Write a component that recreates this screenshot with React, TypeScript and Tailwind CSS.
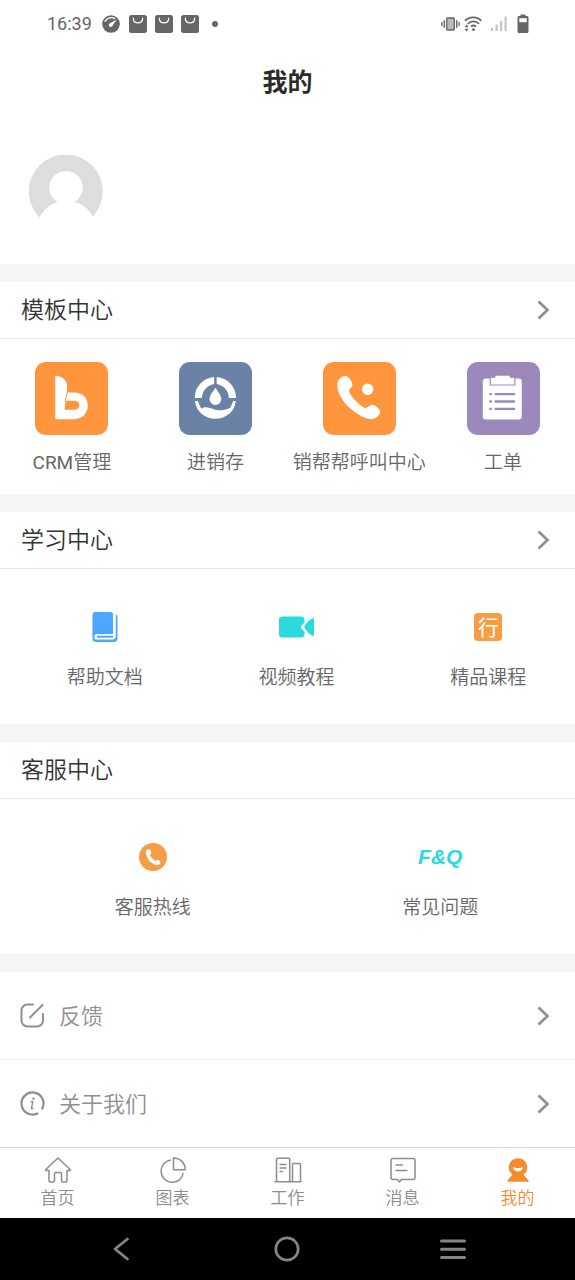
import type { ReactNode } from "react";

function StatusBar() {
  return (
    <div className="flex h-12 items-center justify-between pr-[46px] pl-[47px] text-[#666666]">
      <div className="flex items-center">
        <span className="font-['Roboto',sans-serif] text-lg leading-6 font-normal">16:39</span>
        <svg className="ml-[10px]" width="18" height="18" viewBox="0 0 18 18" aria-hidden="true">
          <circle cx="9" cy="9" r="8.8" fill="currentColor" />
          <path d="M3 6.4C5 2.6 9.500 1.800 12.600 3.400" fill="none" stroke="#fff" strokeWidth="1.300" strokeLinecap="round" />
          <path d="M14.600 4.600 10 11.600A2 2 0 0 1 7.200 8.800Z" fill="#fff" />
        </svg>
        <div className="ml-[9px] flex gap-2">
          {[0, 1, 2].map((n) => (
            <svg key={n} width="18" height="18" viewBox="0 0 18 18" aria-hidden="true">
              <rect width="18" height="18" rx="2.500" fill="currentColor" />
              <path d="M4.300 3.200C4.500 9.400 13.500 9.400 13.700 3.200" fill="none" stroke="#fff" strokeWidth="1.200" strokeLinecap="round" />
            </svg>
          ))}
        </div>
        <span className="ml-[13px] size-[6px] rounded-full bg-[#666666]" />
      </div>
      <div className="flex items-center">
        <svg width="19" height="16" viewBox="0 0 20 16" fill="none" stroke="currentColor" aria-hidden="true">
          <rect x="6" y="1.700" width="8" height="12.600" rx="0.800" fill="#bbbbbb" strokeWidth="1.400" />
          <path d="M3.400 4v8M16.600 4v8" strokeWidth="1.500" />
          <path d="M0.900 6v4M19.100 6v4" strokeWidth="1.300" />
        </svg>
        <svg className="ml-1" width="18" height="16" viewBox="0 0 18 16" fill="none" stroke="currentColor" aria-hidden="true">
          <path d="M1 4.800C5.500.3 13 .3 17.300 4.800M3.800 8C7 4.600 12 4.600 15 8M7 10.600C8.500 9.300 10.500 9.300 12 10.600" strokeWidth="1.800" />
          <circle cx="9.500" cy="13.700" r="1.400" fill="currentColor" stroke="none" />
          <path d="M.6 11.300 2.600 8.600 4.600 11.300ZM.6 12.700 2.600 15.400 4.600 12.700Z" fill="currentColor" stroke="none" />
        </svg>
        <svg className="ml-2" width="18" height="16" viewBox="0 0 18 16" fill="#c4c4c4" aria-hidden="true">
          <rect x="1" y="12" width="2.200" height="3" />
          <rect x="5.500" y="8.500" width="2.200" height="6.500" />
          <rect x="10" y="5" width="2.200" height="10" />
          <rect x="14.500" y="0.500" width="2.200" height="14.500" />
        </svg>
        <svg className="ml-[9px]" width="12" height="20" viewBox="0 0 12 20" aria-hidden="true">
          <path d="M3.500 .5h5v1.600H10A1.500 1.500 0 0 1 11.500 3.600V17.500A1.500 1.500 0 0 1 10 19H2A1.500 1.500 0 0 1 .5 17.500V3.600A1.500 1.500 0 0 1 2 2.100h1.500Z" fill="currentColor" />
          <rect x="2.300" y="4.200" width="7.400" height="4" fill="#fff" />
        </svg>
      </div>
    </div>
  );
}

function Chevron() {
  return (
    <svg className="mr-[25px]" width="13" height="20" viewBox="0 0 13 20" fill="none" stroke="#8f8f8f" strokeWidth="2.700" aria-hidden="true">
      <path d="M1.500 1.500 10.500 10 1.500 18.500" />
    </svg>
  );
}

function Section({ title, link, children }: { title: string; link?: boolean; children: ReactNode }) {
  return (
    <section className="border-t-[18px] border-[#f5f5f5]">
      <h2 className="border-b border-[#e6e6e6] text-[23px] leading-[52px] text-[#333333]">
        {link ? (
          <a href="#section" className="flex items-center justify-between pl-[21px]">
            <span className="pb-1">{title}</span>
            <Chevron />
          </a>
        ) : (
          <span className="block pb-1 pl-[21px]">{title}</span>
        )}
      </h2>
      {children}
    </section>
  );
}

function AppTile({ label, children }: { label: ReactNode; children: ReactNode }) {
  return (
    <a href="#app" className="flex flex-col items-center gap-[14px] whitespace-nowrap pt-[23px] pb-[17px] text-[19px] leading-7 text-[#666666]">
      <svg width="73" height="73" viewBox="0 0 74 74" aria-hidden="true">
        {children}
      </svg>
      <span className="font-['Roboto','Noto_Sans_CJK_SC',sans-serif]">{label}</span>
    </a>
  );
}

function LinkTile({ label, children }: { label: string; children: ReactNode }) {
  return (
    <a href="#item" className="flex flex-col items-center gap-[17px] pt-10 pb-[34px] pl-[18px] text-[19px] leading-7 text-[#666666]">
      <span className="flex h-9 items-center justify-center">{children}</span>
      {label}
    </a>
  );
}

function Tab({ label, active, children }: { label: string; active?: boolean; children: ReactNode }) {
  return (
    <a
      href="#tab"
      className={
        active
          ? "flex flex-col items-center gap-px pt-2 pb-[9px] text-[17px] leading-6 text-[#f88a2e]"
          : "flex flex-col items-center gap-px pt-2 pb-[9px] text-[17px] leading-6 text-[#8c8c8c]"
      }
    >
      <svg width="28" height="28" viewBox="0 0 28 28" fill="none" stroke="currentColor" strokeWidth="1.500" strokeLinejoin="round" aria-hidden="true">
        {children}
      </svg>
      {label}
    </a>
  );
}

export default function App() {
  return (
    <div className="w-full bg-white font-['Noto_Sans_CJK_SC',sans-serif] font-[350]">
      <StatusBar />
      <header>
        <h1 className="pb-[2px] text-center text-[25px] leading-[64px] font-bold text-[#2b2b2b]">我的</h1>
      </header>
      <main>
        <div className="px-[29px] pt-[41px] pb-[35px]">
          <svg width="74" height="74" viewBox="0 0 74 74" aria-label="头像">
            <path d="M10.500 62.500A37 37 0 1 1 64 61.500C59 53.500 53 48.500 45.500 47A16.700 16.700 0 1 0 28.500 47C21 49 15 54.500 10.500 62.500Z" fill="#dddddd" />
          </svg>
        </div>

        <Section title="模板中心" link>
          <div className="grid grid-cols-4">
            <AppTile label={<><span className="font-normal">CRM</span>管理</>}>
              <rect width="74" height="74" rx="11" fill="#ff953d" />
              <path fillRule="evenodd" d="M20.500 14C28 14.500 32.500 18.500 32.500 24.500V31H40C48 31 53.500 36 53.500 44.200S48 58 40 58H20.500ZM31 39.300 30 48.300H40.500A4.500 4.500 0 0 0 40.500 39.300Z" fill="#fff" />
              <path d="M33.500 27 30.500 40" stroke="#ff953d" strokeWidth="1" />
            </AppTile>
            <AppTile label="进销存">
              <rect width="74" height="74" rx="11" fill="#6a82a5" />
              <path d="M35.600 15.200V22.200A15 15 0 0 0 23.200 36.500H16A21 21 0 0 1 35.600 15.200ZM38.200 15.200V22.200A15 15 0 0 1 50.600 36.500H57.800A21 21 0 0 0 38.200 15.200Z" fill="#fff" />
              <path d="M36.900 26C39.500 30 42.900 34 42.900 37.500A6 6 0 0 1 30.900 37.500C30.900 34 34.300 30 36.900 26Z" fill="#fff" />
              <path d="M16.200 39.500H19L22.500 47.500C29 43.500 33 48.500 40 49 45 49.300 49 47.500 52 46.300L55 39.500H57.600C56.500 50 48 57.500 36.900 57.500S17.300 50 16.200 39.500Z" fill="#fff" />
            </AppTile>
            <AppTile label="销帮帮呼叫中心">
              <rect width="74" height="74" rx="11" fill="#ff953d" />
              <path d="M14.500 23.500C14 18 20 13 24 14.500 27 16 30.500 21 29.700 23.800 29 26.500 26 27 26.500 30 28 35 36 43 42 46.300 44.500 47.500 46 44 49 43.500 52 43 57.500 47 58 50.500 58 54 53 58 49 58 39 58 14.500 41 14.500 23.500Z" fill="#fff" />
              <circle cx="45.300" cy="27.700" r="5.800" fill="#fff" />
            </AppTile>
            <AppTile label="工单">
              <rect width="74" height="74" rx="11" fill="#9c88ba" />
              <rect x="16" y="16.700" width="39.500" height="41.500" rx="3" fill="#fff" />
              <path d="M23.500 16V23.300H48.500V16" fill="#fff" stroke="#9c88ba" strokeWidth="1.200" />
              <path d="M28.700 14H43.300V16.500H47V22H25V16.500H28.700Z" fill="#fff" />
              <path d="M29 32.500H47.700M29 40H47.700M29 47.500H47.700" stroke="#9c88ba" strokeWidth="2.400" strokeLinecap="round" />
              <path d="M22.700 32.500H25.100M22.700 40H25.100M22.700 47.500H25.100" stroke="#9c88ba" strokeWidth="2.400" />
            </AppTile>
          </div>
        </Section>

        <Section title="学习中心" link>
          <div className="grid grid-cols-3">
            <LinkTile label="帮助文档">
              <svg width="26" height="32" viewBox="0 0 26 32" aria-hidden="true">
                <path d="M3.500 1H18.500A2.500 2.500 0 0 1 21 3.500V22H4A3.500 3.500 0 0 0 .5 24V4A3 3 0 0 1 3.500 1Z" fill="#4da6ff" />
                <path d="M.5 22V27.500A3.500 3.500 0 0 0 4 31H21.500A4 4 0 0 0 25.500 27V5.500A2 2 0 0 0 23.800 3.500V25A3.500 3.500 0 0 1 20.500 28.500H4.500A1.500 1.500 0 0 1 2.500 27V25A2 2 0 0 1 4.500 23H21V21.500H3Z" fill="#4da6ff" />
                <path d="M5 25.700H21" stroke="#4da6ff" strokeWidth="2" />
              </svg>
            </LinkTile>
            <LinkTile label="视频教程">
              <svg width="36" height="22" viewBox="0 0 36 22" fill="#2bd9de" aria-hidden="true">
                <path d="M4 .5H23A3.500 3.500 0 0 1 26.500 4V6.500C25 8 23 9.500 23 11S25 14 26.500 15.500V18A3.500 3.500 0 0 1 23 21.500H4A3 3 0 0 1 1 18.500V3.500A3 3 0 0 1 4 .5Z" />
                <path d="M26.800 9.500C29 6 32 3 36 2V20C32 19 29 16 26.800 12.500A3 3 0 0 1 26.800 9.500Z" />
              </svg>
            </LinkTile>
            <LinkTile label="精品课程">
              <span className="flex size-7 justify-center rounded bg-[#f79d45] text-[21px] leading-[26px] font-normal text-white">行</span>
            </LinkTile>
          </div>
        </Section>

        <Section title="客服中心">
          <div className="grid grid-cols-2">
            <LinkTile label="客服热线">
              <svg width="28" height="28" viewBox="0 0 28 28" aria-hidden="true">
                <circle cx="14" cy="14" r="14" fill="#f79d45" />
                <path d="M7 9.500C7 7 9 5.800 10.300 6.200 11.600 7 12.700 9 12.200 10.200 11.900 11 10.900 11.200 11.100 12.200 11.800 14.200 14.200 16.600 16.300 17.700 17.200 18 17.700 16.800 18.700 16.800 19.900 16.900 21.500 18.500 21.300 19.700 21 21.300 19.400 22.200 18 22.100 13 21.800 7 15.500 7 9.500Z" fill="#fff" />
              </svg>
            </LinkTile>
            <LinkTile label="常见问题">
              <span className="font-['Liberation_Sans',sans-serif] text-[21px] leading-7 font-bold text-[#2bd9de] italic">F&amp;Q</span>
            </LinkTile>
          </div>
        </Section>

        <nav aria-label="更多" className="border-t-[18px] border-[#f5f5f5] text-[22px] leading-[85px] text-[#8f8f8f]">
          <a href="#feedback" className="flex items-center border-b border-[#f0f0f0] pl-5">
            <svg width="25" height="25" viewBox="0 0 25 25" fill="none" stroke="currentColor" strokeWidth="2" strokeLinecap="round" aria-hidden="true">
              <path d="M13 1.500H7.500A6 6 0 0 0 1.500 7.500V17.500A6 6 0 0 0 7.500 23.500H17A6 6 0 0 0 23 17.500V11M10 14.500 22.500 2" />
            </svg>
            <span className="ml-[14px] flex-1 pb-[2px]">反馈</span>
            <Chevron />
          </a>
          <a href="#about" className="flex items-center pl-5">
            <svg width="25" height="25" viewBox="0 0 25 25" fill="none" stroke="currentColor" aria-hidden="true">
              <path d="M22.300 17.500A11 11 0 1 0 17.300 22.400" strokeWidth="2.200" strokeLinecap="round" />
              <path d="M10.700 10.800H12.800L11.400 17.500H13.500" strokeWidth="1.400" />
              <circle cx="13.400" cy="7.800" r="1.200" fill="currentColor" stroke="none" />
            </svg>
            <span className="ml-[14px] flex-1 pb-[2px]">关于我们</span>
            <Chevron />
          </a>
        </nav>
      </main>

      <nav aria-label="主导航" className="grid grid-cols-5 border-t border-[#d9d9d9]">
        <Tab label="首页">
          <path d="M14 2 1.800 13.500V14.500H5V24.500A1.500 1.500 0 0 0 6.500 26H9A1.500 1.500 0 0 0 10.500 24.500V17.500A1 1 0 0 1 11.500 16.500H16.500A1 1 0 0 1 17.500 17.500V24.500A1.500 1.500 0 0 0 19 26H21.500A1.500 1.500 0 0 0 23 24.500V14.500H26.200V13.500Z" />
        </Tab>
        <Tab label="图表">
          <path d="M12 4A11.200 11.200 0 1 0 24.300 17.200" />
          <path d="M14.500 2A11.500 11.500 0 0 1 26.200 13.800H14.500Z" />
        </Tab>
        <Tab label="工作">
          <path d="M2.500 25.500V3.500A1.200 1.200 0 0 1 3.700 2.300H14.500A1.200 1.200 0 0 1 15.700 3.500V25.500M18.500 25.500V8.500A1 1 0 0 1 19.500 7.500H25.500A1 1 0 0 1 26.500 8.500V25.500M.5 25.700H27.500M5.500 8.500H12.500M5.500 12H12.500M5.500 15.500H9" />
        </Tab>
        <Tab label="消息">
          <path d="M4 2.500H24A2 2 0 0 1 26 4.500V21.500A2 2 0 0 1 24 23.500H12.500L10.500 26 8.500 23.500H4A2 2 0 0 1 2 21.500V4.500A2 2 0 0 1 4 2.500ZM6.500 9H14M6.500 14.500H18.500" />
        </Tab>
        <Tab label="我的" active>
          <path d="M14 2.200A9 9 0 0 0 8.500 18.400L3.400 24.500A.8.800 0 0 0 4 25.800H24A.8.800 0 0 0 24.600 24.500L19.500 18.400A9 9 0 0 0 14 2.200Z" fill="currentColor" stroke="none" />
          <path d="M9 11.300C11 12.300 17 12.300 19 11.300 18.500 17 9.500 17 9 11.300Z" fill="#fff" stroke="none" />
        </Tab>
      </nav>

      <div className="flex items-center justify-between bg-black py-[18px] pr-[109px] pl-[108px]">
        <button type="button" aria-label="返回">
          <svg className="block" width="26" height="26" viewBox="0 0 26 26" fill="none" stroke="#858585" strokeWidth="2.800" strokeLinecap="round" strokeLinejoin="round">
            <path d="M19.500 3 7 13 19.500 23" />
          </svg>
        </button>
        <button type="button" aria-label="主屏幕">
          <svg className="block" width="26" height="26" viewBox="0 0 26 26" fill="none" stroke="#858585" strokeWidth="2.700">
            <circle cx="13" cy="13" r="11.200" />
          </svg>
        </button>
        <button type="button" aria-label="菜单">
          <svg className="block" width="26" height="26" viewBox="0 0 26 26" stroke="#858585" strokeWidth="3" strokeLinecap="round">
            <path d="M1.500 5H24.500M1.500 13.300H24.500M1.500 21.600H24.500" />
          </svg>
        </button>
      </div>
    </div>
  );
}
